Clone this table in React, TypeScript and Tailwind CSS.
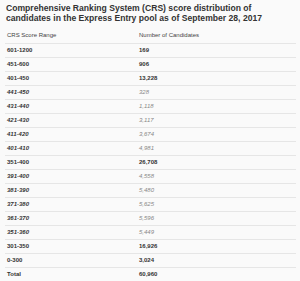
import React from 'react';

const rows = [
  { range: '601-1200', count: '169', sub: false },
  { range: '451-600', count: '906', sub: false },
  { range: '401-450', count: '13,228', sub: false },
  { range: '441-450', count: '328', sub: true },
  { range: '431-440', count: '1,118', sub: true },
  { range: '421-430', count: '3,117', sub: true },
  { range: '411-420', count: '3,674', sub: true },
  { range: '401-410', count: '4,981', sub: true },
  { range: '351-400', count: '26,708', sub: false },
  { range: '391-400', count: '4,558', sub: true },
  { range: '381-390', count: '5,480', sub: true },
  { range: '371-380', count: '5,625', sub: true },
  { range: '361-370', count: '5,596', sub: true },
  { range: '351-360', count: '5,449', sub: true },
  { range: '301-350', count: '16,926', sub: false },
  { range: '0-300', count: '3,024', sub: false },
  { range: 'Total', count: '60,960', sub: false },
];

export default function App() {
  return (
    <div className="w-[300px] h-[281px] overflow-hidden bg-[#fafafa] px-[5px] pt-[3px] font-['Liberation_Sans',Arial,sans-serif] text-[#333]">
      <h2 className="text-[8.6px] font-bold leading-[10px] text-[#333] pl-[1px]">
        Comprehensive Ranking System (CRS) score distribution of candidates in the Express Entry pool as of September 28, 2017
      </h2>
      <table className="mt-[6px] w-[291px] border-collapse text-[6px]">
        <thead>
          <tr className="h-[14px]">
            <th className="pl-[2px] text-left font-normal text-[#444]">CRS Score Range</th>
            <th className="w-[157px] text-left font-normal text-[#444]">Number of Candidates</th>
          </tr>
        </thead>
        <tbody>
          {rows.map((r) => (
            <tr key={r.range} className="h-[14px] border-t border-[#e6e6e6]">
              <td className={`pl-[2px] font-bold text-[#333] ${r.sub ? 'italic' : ''}`}>{r.range}</td>
              <td className={r.sub ? 'italic text-[#888]' : 'font-bold text-[#333]'}>{r.count}</td>
            </tr>
          ))}
        </tbody>
      </table>
    </div>
  );
}
